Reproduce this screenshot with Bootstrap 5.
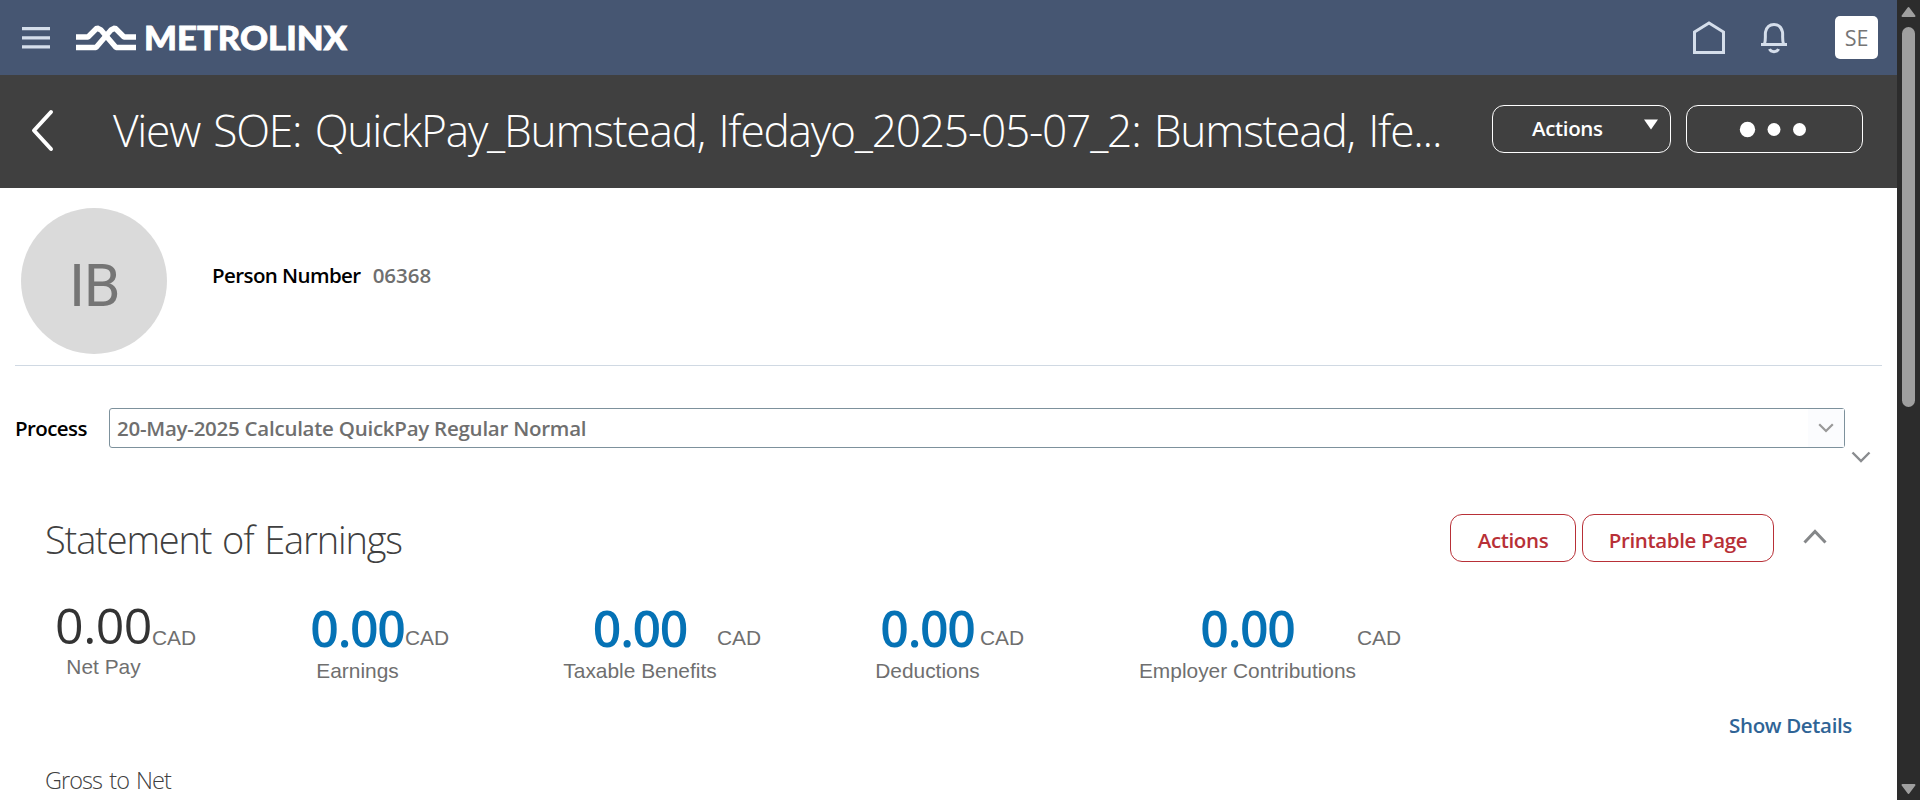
<!DOCTYPE html>
<html lang="en">
<head>
<meta charset="utf-8">
<title>View SOE</title>
<link rel="stylesheet" href="https://cdn.jsdelivr.net/npm/bootstrap@5.3.0/dist/css/bootstrap.min.css">
<style>
  body { font-family: "Open Sans", "Noto Sans", sans-serif; height: 800px; overflow: hidden; background: #fff; color: #000; font-size: 20.5px; line-height: 30px; }
  svg { flex-shrink: 0; }
  .page-col { width: 1897px; height: 800px; }
  .scroll-rail { width: 23px; background: #2c2c2c; padding: 6px 0 5px; }
  .scroll-thumb { width: 13px; height: 380px; border-radius: 7px; background: #9f9f9f; margin-top: 9px; }
  .topbar { height: 75px; background: #465672; padding: 0 19px 0 22px; }
  .home-icon { margin-top: -1px; }
  .bell-icon { margin-left: 34px; }
  .user-chip { width: 43px; height: 43px; margin-left: 47px; border-radius: 5px; background: #fff; color: #757575; font-size: 21.5px; }
  .titlebar { height: 113px; background: #404040; color: #fff; padding: 0 34px 0 30px; }
  .page-title { font-size: 44.3px; font-weight: 300; line-height: 60px; letter-spacing: -1.23px; word-spacing: 3px; margin: 25px 0 0 57px; }
  .title-actions { gap: 15px; margin-top: 30px; }
  .pill { height: 48px; border: 1px solid #fff; border-radius: 12px; font-weight: 600; letter-spacing: -.35px; }
  .pill-menu { width: 179px; padding: 7px 12px 0 39px; }
  .pill-menu svg { margin-top: 6px; }
  .pill-more { width: 177px; }
  .pill-red { border-color: #b83037; color: #b83037; padding-top: 10px; }
  .person { height: 178px; margin: 0 15px 0 15px; border-bottom: 1px solid #d0d9e3; }
  .avatar { width: 146px; height: 146px; margin: 20px 0 0 6px; background: #dadada; color: #757575; font: 400 59px/155px Roboto, sans-serif; letter-spacing: -1.5px; }
  .person-number { margin: 72px 0 0 45px; gap: 12px; }
  .semi { font-weight: 600; }
  .tight { letter-spacing: -.58px; }
  .muted { color: #6f6f6f; }
  .process-row { height: 82px; padding: 42px 52px 0 15px; }
  .process-label { width: 94px; margin-top: 5px; }
  .select-box { height: 40px; border: 1px solid #7d919c; border-radius: 3px; color: #6f6f6f; }
  .select-value { margin: 4px 0 0 7px; letter-spacing: -.25px; }
  .select-drop { width: 36px; background: #fbfcfe; }
  .expander { height: 55px; padding: 3px 26px 0; }
  .earnings-head { height: 101px; padding: 11px 70px 0 45px; }
  .section-title { font-size: 38px; font-weight: 300; color: #404040; line-height: 50px; letter-spacing: -1.15px; word-spacing: 2px; }
  .collapse-icon { margin: 15px 0 0 29px; }
  .stats { font-family: "Liberation Sans", Arial, sans-serif; font-size: 20.9px; color: #6f6f6f; height: 100px; padding-left: 55px; }
  .amount { font-family: "Open Sans", "Noto Sans", sans-serif; font-size: 50px; line-height: 60px; font-weight: 600; letter-spacing: -1.3px; color: #0572b5; margin-top: -6px; }
  .amount-net { color: #333; font-weight: 400; letter-spacing: -.5px; margin-top: -9px; }
  .stat-label { line-height: 24px; }
  .amount:not(.amount-net) + .stat-label { padding-top: 1px; }
  .cad { width: 43px; margin-right: 115px; padding-top: 19px; }
  .details-link { padding-right: 45px; color: #2f6496; margin-top: 6px; letter-spacing: -.35px; }
  .subsection { padding-left: 45px; font-size: 23.5px; font-weight: 300; color: #404040; margin-top: 25px; letter-spacing: -.95px; word-spacing: 2px; }
</style>
</head>
<body>
<div class="d-flex">
  <div class="page-col d-flex flex-column overflow-hidden">
    <header class="topbar d-flex align-items-center">
      <svg width="28" height="22" viewBox="0 0 28 22" fill="#d5deeb"><path d="M0 0h28v3.3H0zM0 9.200h28v3.3H0zM0 18.200h28v3.300H0z"/></svg>
      <svg class="ms-4" width="280" height="56" viewBox="0 -12 280 56" aria-label="Metrolinx">
        <g fill="none" stroke="#fff" stroke-width="5.400" stroke-linejoin="bevel"><path d="M2 15h12l9-9 4 2 15 17.500h20"/><path d="M2 25.500h20l15-17.500 4-2 9 9h12"/></g>
        <text x="70" y="27.500" font-family="Lato" font-weight="900" font-size="33" fill="#fff" stroke="#fff" stroke-width=".8" textLength="203" lengthAdjust="spacingAndGlyphs">METROLINX</text>
      </svg>
      <svg class="home-icon ms-auto" width="34" height="34" viewBox="0 0 34 34" fill="none" stroke="#d5deeb" stroke-width="3"><path d="M2.500 12 17 3l14.500 9v20.500h-29z"/></svg>
      <svg class="bell-icon" width="28" height="32" viewBox="0 0 28 32" fill="none" stroke="#d5deeb" stroke-width="3"><path d="M1 22.500h26M4.500 22C6 18 5 13 5.500 10c1-4.500 4-7.500 8.500-7.500s7.500 3 8.500 7.500c.5 3-.5 8 1 12M9.500 27c1.500 3.500 7.500 3.500 9 0"/></svg>
      <div class="user-chip d-flex align-items-center justify-content-center">SE</div>
    </header>

    <div class="titlebar d-flex">
      <svg width="26" height="113" viewBox="0 0 26 113" fill="none" stroke="#fff" stroke-width="4" stroke-linecap="round" stroke-linejoin="round"><path d="M21 37 4 55.500 21 74"/></svg>
      <h1 class="page-title text-nowrap">View SOE: QuickPay_Bumstead, Ifedayo_2025-05-07_2: Bumstead, Ife...</h1>
      <div class="title-actions d-flex ms-auto">
        <div class="pill pill-menu d-flex"><span>Actions</span>
          <svg class="ms-auto" width="14" height="11" viewBox="0 0 14 11"><path d="M0 .500h14L7 10.500z" fill="#fff"/></svg></div>
        <div class="pill pill-more"><svg width="175" height="46" viewBox="0 0 175 46" fill="#fff" class="d-block"><circle cx="60.500" cy="23.500" r="7.700"/><circle cx="87" cy="23.500" r="6.500"/><circle cx="112.500" cy="23.500" r="6.500"/></svg></div>
      </div>
    </div>

    <section class="person d-flex">
      <div class="avatar rounded-circle text-center">IB</div>
      <div class="person-number d-flex semi"><span class="tight text-nowrap">Person Number</span><span class="muted">06368</span></div>
    </section>

    <div class="process-row d-flex">
      <span class="process-label semi tight">Process</span>
      <div class="select-box flex-grow-1 d-flex">
        <span class="select-value semi text-nowrap">20-May-2025 Calculate QuickPay Regular Normal</span>
        <div class="select-drop ms-auto d-flex align-items-center justify-content-center"><svg width="16" height="10" viewBox="0 0 16 10" fill="none" stroke="#999" stroke-width="2.200"><path d="m1.200 1.200 6.800 6.800 6.800-6.800"/></svg></div>
      </div>
    </div>
    <div class="expander d-flex justify-content-end"><svg width="20" height="13" viewBox="0 0 20 13" fill="none" stroke="#8a8c8f" stroke-width="2.400"><path d="m1.500 1.500 8.500 8.500 8.500-8.500"/></svg></div>

    <section class="earnings-head d-flex">
      <h2 class="section-title text-nowrap mb-0">Statement of Earnings</h2>
      <div class="d-flex ms-auto" style="gap:6px">
        <div class="pill pill-red text-center" style="width:126px">Actions</div>
        <div class="pill pill-red text-center text-nowrap" style="width:192px">Printable Page</div>
      </div>
      <svg class="collapse-icon" width="24" height="15" viewBox="0 0 24 15" fill="none" stroke="#858789" stroke-width="3"><path d="M1.500 13.500 12 2.500l10.500 11"/></svg>
    </section>

    <section class="stats d-flex">
      <div class="text-center" style="width:97px"><div class="amount amount-net">0.00</div><div class="stat-label">Net Pay</div></div><span class="cad">CAD</span>
      <div class="text-center" style="width:95px"><div class="amount">0.00</div><div class="stat-label">Earnings</div></div><span class="cad">CAD</span>
      <div class="text-center" style="width:154px"><div class="amount">0.00</div><div class="stat-label text-nowrap">Taxable Benefits</div></div><span class="cad">CAD</span>
      <div class="text-center" style="width:105px"><div class="amount">0.00</div><div class="stat-label">Deductions</div></div><span class="cad">CAD</span>
      <div class="text-center" style="width:219px"><div class="amount">0.00</div><div class="stat-label text-nowrap">Employer Contributions</div></div><span class="cad">CAD</span>
    </section>
    <div class="details-link text-end semi">Show Details</div>
    <div class="subsection">Gross to Net</div>
  </div>
  <aside class="scroll-rail d-flex flex-column align-items-center">
    <svg width="15" height="12" viewBox="0 0 15 12" fill="#9f9f9f" stroke="#9f9f9f" stroke-width="2" stroke-linejoin="round"><path d="M7.500 2 13.500 10h-12z"/></svg>
    <div class="scroll-thumb"></div>
    <svg class="mt-auto" width="15" height="12" viewBox="0 0 15 12" fill="#9f9f9f" stroke="#9f9f9f" stroke-width="2" stroke-linejoin="round"><path d="M7.500 10 13.500 2h-12z"/></svg>
  </aside>
</div>
<script src="https://cdn.jsdelivr.net/npm/bootstrap@5.3.0/dist/js/bootstrap.bundle.min.js"></script>
</body>
</html>
